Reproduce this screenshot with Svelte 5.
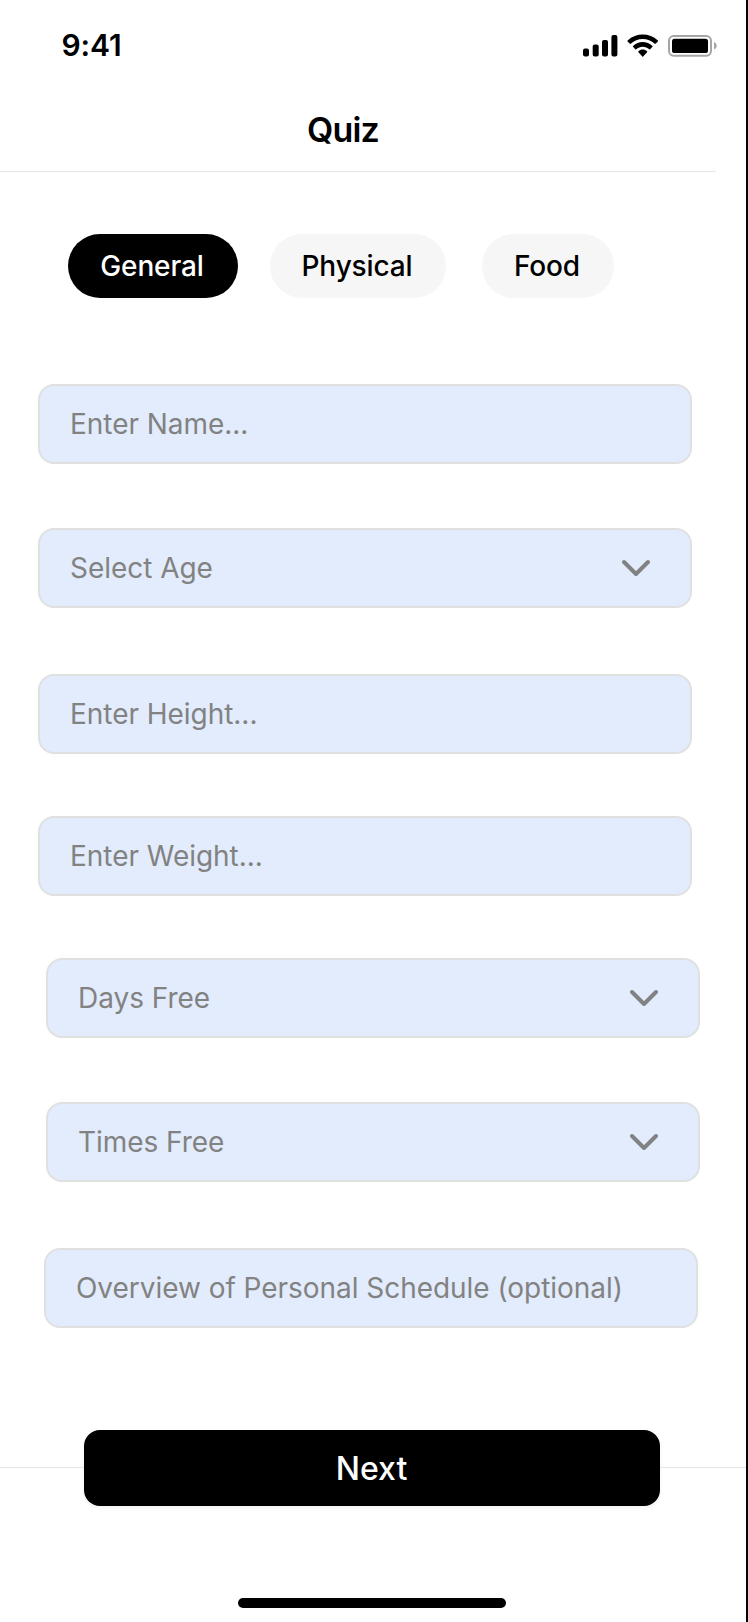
<script>
  const tabs = [
    { label: 'General', kind: 'general' },
    { label: 'Physical', kind: 'physical' },
    { label: 'Food', kind: 'food' },
  ];
  const fields = [
    { label: 'Enter Name...', select: false, group: 'first', gap: 64 },
    { label: 'Select Age', select: true, group: 'first', gap: 66 },
    { label: 'Enter Height...', select: false, group: 'first', gap: 62 },
    { label: 'Enter Weight...', select: false, group: 'first', gap: 62 },
    { label: 'Days Free', select: true, group: 'second', gap: 64 },
    { label: 'Times Free', select: true, group: 'second', gap: 66 },
    { label: 'Overview of Personal Schedule (optional)', select: false, group: 'third', gap: 0 },
  ];
</script>

<main class="screen">
  <div class="status">
    <span class="time">9:41</span>
    <svg class="signals" width="136" height="24" viewBox="0 0 136 24" aria-hidden="true">
      <rect x="1" y="14.4" width="6" height="8.2" rx="2" />
      <rect x="10.7" y="10.6" width="6" height="12" rx="2" />
      <rect x="20" y="6" width="6" height="16.6" rx="2" />
      <rect x="29.4" y="1" width="6" height="21.6" rx="2" />
      <g transform="translate(45.4 0.6) scale(1.79 1.8)">
        <path d="M8.5713 2.46628C11.0584 2.46639 13.4504 3.38847 15.2529 5.04195C15.3887 5.16959 15.6056 5.16798 15.7393 5.03834L17.0368 3.77487C17.1045 3.70911 17.1422 3.62004 17.1417 3.52735C17.1411 3.43467 17.1023 3.34603 17.0338 3.28104C12.3028 -1.09368 4.83907 -1.09368 0.108056 3.28104C0.0395 3.34598 0.0006 3.4346 0 3.52728C-0.0006 3.61996 0.037 3.70906 0.1047 3.77487L1.40255 5.03834C1.53615 5.16817 1.75327 5.16978 1.88893 5.04195C3.69167 3.38836 6.08395 2.46628 8.5713 2.46628ZM8.56795 6.68656C9.92527 6.68647 11.2341 7.19821 12.2403 8.12234C12.3763 8.25347 12.5907 8.25063 12.7234 8.11594L14.0106 6.79649C14.0784 6.72735 14.116 6.63356 14.115 6.5361C14.1141 6.43863 14.0746 6.34563 14.0054 6.27788C10.9416 3.38974 6.19688 3.38974 3.13305 6.27788C3.06384 6.34563 3.02435 6.43869 3.02345 6.5362C3.02254 6.63371 3.06028 6.72752 3.12822 6.79649L4.41513 8.11594C4.54778 8.25063 4.76215 8.25347 4.89823 8.12234C5.90368 7.19882 7.21152 6.68713 8.56795 6.68656ZM11.0924 9.48011C11.0943 9.58546 11.0572 9.68703 10.9899 9.76084L8.81327 12.2156C8.74946 12.2877 8.66247 12.3283 8.5717 12.3283C8.48093 12.3283 8.39394 12.2877 8.33013 12.2156L6.15314 9.76084C6.08585 9.68697 6.04886 9.58537 6.05089 9.48002C6.05292 9.37468 6.09379 9.27491 6.16385 9.20426C7.55397 7.89086 9.58943 7.89086 10.9795 9.20426C11.0496 9.27496 11.0904 9.37476 11.0924 9.48011Z" />
      </g>
      <rect x="87" y="2" width="42" height="19.7" rx="4.6" fill="none" stroke="#a6a6a6" stroke-width="2" />
      <rect x="90" y="4.7" width="36" height="14.4" rx="2.6" />
      <path d="M132 8v7.6c1.6-.6 2.7-2.1 2.7-3.8s-1.1-3.200-2.700-3.800z" fill="#a6a6a6" />
    </svg>
  </div>

  <header class="header"><h1>Quiz</h1></header>

  <nav class="tabs">
    {#each tabs as tab}
      <button class="tab {tab.kind}">{tab.label}</button>
    {/each}
  </nav>

  <form class="form">
    {#each fields as field}
      <div class="field {field.group}" style="margin-bottom: {field.gap}px">
        <span>{field.label}</span>
        {#if field.select}
          <svg width="28" height="18" viewBox="0 0 28 18" aria-hidden="true">
            <path d="M2 3l12 12L26 3" fill="none" stroke="#828282" stroke-width="4" stroke-linecap="round" stroke-linejoin="round" />
          </svg>
        {/if}
      </div>
    {/each}
  </form>

  <div class="action"><button class="next">Next</button></div>
  <footer class="bottom"><div class="home"></div></footer>
</main>

<style>
  :global(body) { margin: 0; background: #fff; }
  .screen {
    box-sizing: border-box;
    width: 748px;
    height: 1622px;
    display: flex;
    flex-direction: column;
    border-right: 2px solid #000;
    background: #fff;
    color: #000;
    font-family: Inter, sans-serif;
    overflow: hidden;
  }
  button { border: 0; font-family: inherit; margin: 0; }
  .status {
    display: flex;
    justify-content: space-between;
    align-items: center;
    height: 24px;
    padding: 34px 28px 30px 61.5px;
  }
  .time { padding-bottom: 1px; font-size: 30px; font-weight: 600; line-height: 23px; letter-spacing: -0.1px; }
  .signals { display: block; }
  .header {
    box-sizing: border-box;
    width: 716px;
    height: 84px;
    border-bottom: 1px solid #e6e6e6;
    display: flex;
    justify-content: center;
    align-items: center;
  }
  h1 { margin: 0; padding: 0 30px 0 0; font-size: 34px; font-weight: 600; line-height: 84px; letter-spacing: -0.75px; }
  .tabs { display: flex; padding: 62px 0 86px 68px; }
  .tab {
    height: 64px;
    padding: 0;
    border-radius: 32px;
    background: #f6f6f6;
    color: #000;
    font-size: 28px;
    font-weight: 500;
    letter-spacing: -0.14px;
  }
  .general { width: 170px; margin-right: 32px; padding-right: 2px; background: #000; color: #fff; }
  .physical { width: 176px; margin-right: 36px; padding-right: 2px; }
  .food { width: 132px; padding-right: 2px; }
  .form { display: flex; flex-direction: column; height: 1046px; }
  .field {
    box-sizing: border-box;
    flex: none;
    width: 654px;
    height: 80px;
    border: 2px solid #e0e0e0;
    border-radius: 16px;
    background: #e2ecfd;
    color: #828282;
    font-size: 28px;
    line-height: 40px;
    letter-spacing: -0.04px;
    display: flex;
    align-items: center;
    justify-content: space-between;
    padding: 0 40px 0 30px;
  }
  .first { margin-left: 38px; }
  .second { margin-left: 46px; }
  .third { margin-left: 44px; }
  .action {
    height: 76px;
    display: flex;
    justify-content: center;
    padding-right: 2px;
    background: linear-gradient(#e6e6e6, #e6e6e6) 0 37px / 100% 1px no-repeat;
  }
  .next {
    width: 576px;
    height: 76px;
    border-radius: 16px;
    padding: 1px 1px 0 0;
    background: #000;
    color: #fff;
    font-size: 32px;
    font-weight: 500;
    box-shadow: 0 2px 4px rgba(0, 0, 0, 0.05);
  }
  .bottom { display: flex; justify-content: center; padding: 92px 2px 14px 0; }
  .home { width: 268px; height: 10px; border-radius: 5px; background: #000; }
</style>
